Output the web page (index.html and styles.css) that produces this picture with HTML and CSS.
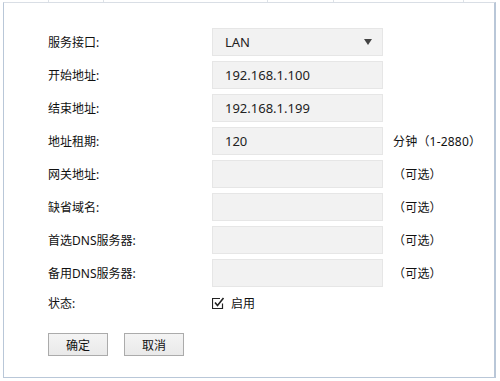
FILE: index.html
```html
<!DOCTYPE html>
<html lang="zh-CN">
<head>
<meta charset="utf-8">
<link rel="stylesheet" href="styles.css">
</head>
<body>
<div class="tabs">
  <span class="tab t1"></span><span class="tab t2"></span><span class="tab t3"></span><span class="tab t4"></span><span class="tab t5"></span>
</div>
<div class="panel">
  <div class="form">
    <div class="row">
      <label class="lbl">服务接口:</label>
      <div class="field select"><span>LAN</span><span class="arrow"></span></div>
    </div>
    <div class="row">
      <label class="lbl">开始地址:</label>
      <div class="field">192.168.1.100</div>
    </div>
    <div class="row">
      <label class="lbl">结束地址:</label>
      <div class="field">192.168.1.199</div>
    </div>
    <div class="row">
      <label class="lbl">地址租期:</label>
      <div class="field">120</div>
      <span class="suffix">分钟（1-2880）</span>
    </div>
    <div class="row">
      <label class="lbl">网关地址:</label>
      <div class="field"></div>
      <span class="suffix">（可选）</span>
    </div>
    <div class="row">
      <label class="lbl">缺省域名:</label>
      <div class="field"></div>
      <span class="suffix">（可选）</span>
    </div>
    <div class="row">
      <label class="lbl">首选DNS服务器:</label>
      <div class="field"></div>
      <span class="suffix">（可选）</span>
    </div>
    <div class="row">
      <label class="lbl">备用DNS服务器:</label>
      <div class="field"></div>
      <span class="suffix">（可选）</span>
    </div>
    <div class="row status">
      <label class="lbl">状态:</label>
      <span class="check"><svg width="13" height="13" viewBox="0 0 13 13"><path d="M10.5 6.5V11.5H0.5V1.5H8" fill="none" stroke="#222" stroke-width="1.2"/><path d="M3 5.5L5.5 8.5L11.5 1" fill="none" stroke="#222" stroke-width="1.6"/></svg></span>
      <span class="enable">启用</span>
    </div>
    <div class="buttons">
      <button class="btn">确定</button>
      <button class="btn">取消</button>
    </div>
  </div>
</div>
</body>
</html>
```

FILE: styles.css
```css
html, body {
  margin: 0;
  padding: 0;
  background: #fff;
}
body {
  width: 500px;
  height: 381px;
  overflow: hidden;
  font-family: "Noto Sans", "Noto Sans CJK SC", sans-serif;
  font-size: 12px;
  color: #111;
}
.tabs {
  display: flex;
  height: 2px;
}
.tab {
  border-right: 1px solid #dde2e8;
  height: 2px;
}
.t1 { width: 48px; }
.t2 { width: 54px; }
.t3 { width: 163px; }
.t4 { width: 65px; }
.t5 { width: 129px; }
.panel {
  margin-left: 3px;
  width: 490px;
  height: 374px;
  border-top: 1px solid #d9dee5;
  border-left: 1px solid #b9c7d8;
  border-right: 2px solid #b9c7d8;
  border-bottom: 1px solid #b9c7d8;
}
.form {
  padding: 25px 0 0 44px;
  display: flex;
  flex-direction: column;
  gap: 5px;
}
.row {
  display: flex;
  align-items: center;
  height: 28px;
}
.lbl {
  width: 164px;
  flex: none;
}
.field {
  box-sizing: border-box;
  width: 171px;
  height: 28px;
  background: #f2f2f2;
  border: 1px solid #e6e6e6;
  padding-left: 12px;
  display: flex;
  align-items: center;
  font-size: 13px;
  color: #222;
}
.select {
  justify-content: space-between;
  padding-right: 10px;
}
.arrow {
  width: 0;
  height: 0;
  border-left: 4.5px solid transparent;
  border-right: 4.5px solid transparent;
  border-top: 6px solid #444;
}
.suffix {
  margin-left: 10px;
  letter-spacing: 0.2px;
}
.status {
  height: 22px;
}
.check {
  display: flex;
  width: 13px;
  height: 13px;
  margin-top: 1px;
}
.enable {
  margin-left: 6px;
}
.buttons {
  display: flex;
  gap: 16px;
  margin-top: 14px;
}
.btn {
  box-sizing: border-box;
  width: 60px;
  height: 23px;
  border: 1px solid #ababab;
  background: linear-gradient(#f4f4f4, #e9e9e9);
  font-family: "Noto Sans", "Noto Sans CJK SC", sans-serif;
  font-size: 12px;
  color: #111;
  padding: 0;
}
```
